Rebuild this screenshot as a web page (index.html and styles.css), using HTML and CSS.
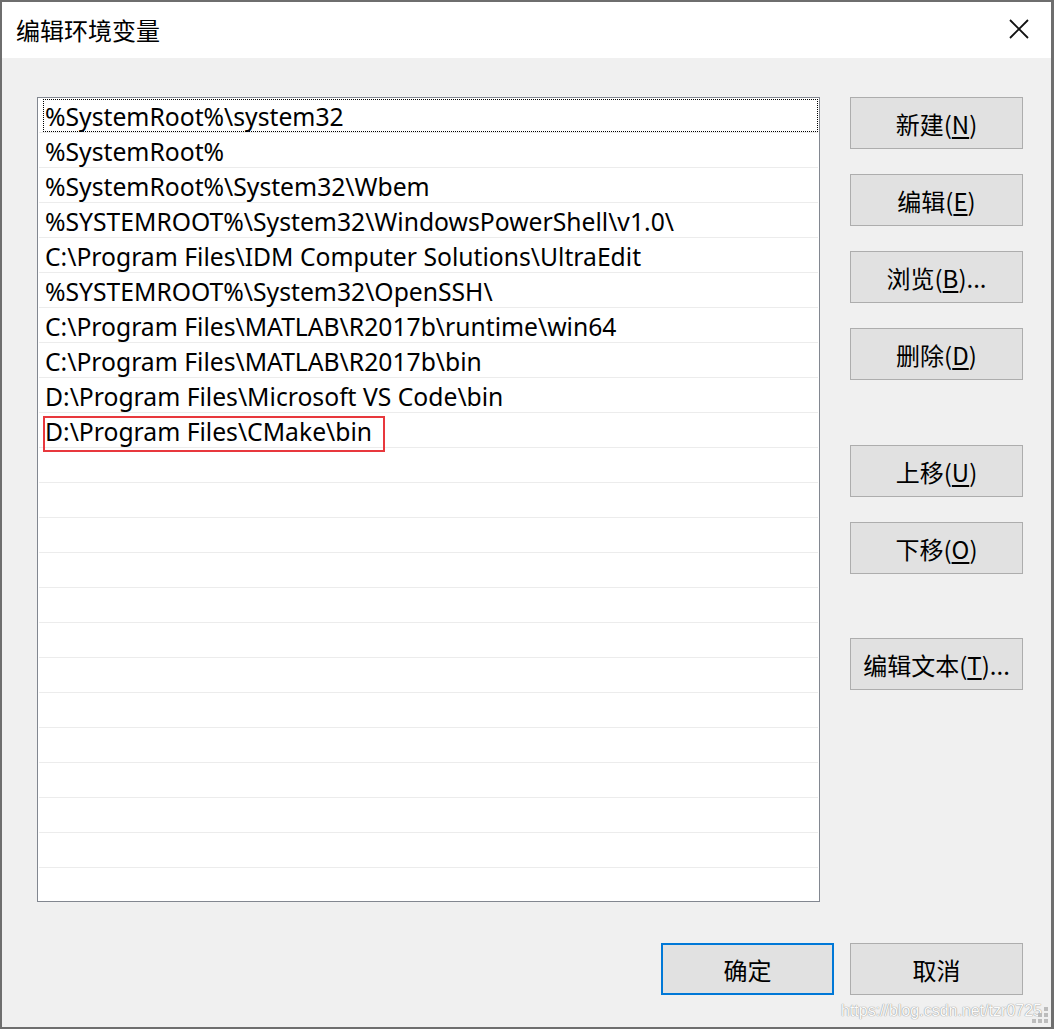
FILE: index.html
```html
<!DOCTYPE html>
<html lang="zh-CN">
<head>
<meta charset="utf-8">
<title>编辑环境变量</title>
<link rel="stylesheet" href="styles.css">
</head>
<body>
<div class="window">
  <div class="titlebar">
    <span class="title">编辑环境变量</span>
    <span class="close">
      <svg width="20" height="20" viewBox="0 0 20 20"><path d="M1 1 L19 19 M19 1 L1 19" stroke="#111" stroke-width="1.8" fill="none"/></svg>
    </span>
  </div>
  <div class="main">
    <div class="list">
      <div class="row focused">%SystemRoot%\system32</div>
      <div class="row">%SystemRoot%</div>
      <div class="row">%SystemRoot%\System32\Wbem</div>
      <div class="row">%SYSTEMROOT%\System32\WindowsPowerShell\v1.0\</div>
      <div class="row">C:\Program Files\IDM Computer Solutions\UltraEdit</div>
      <div class="row">%SYSTEMROOT%\System32\OpenSSH\</div>
      <div class="row">C:\Program Files\MATLAB\R2017b\runtime\win64</div>
      <div class="row">C:\Program Files\MATLAB\R2017b\bin</div>
      <div class="row">D:\Program Files\Microsoft VS Code\bin</div>
      <div class="row"><span class="marked">D:\Program Files\CMake\bin</span></div>
      <div class="row"></div>
      <div class="row"></div>
      <div class="row"></div>
      <div class="row"></div>
      <div class="row"></div>
      <div class="row"></div>
      <div class="row"></div>
      <div class="row"></div>
      <div class="row"></div>
      <div class="row"></div>
      <div class="row"></div>
      <div class="row"></div>
      <div class="row last"></div>
    </div>
    <div class="side">
      <div class="group">
        <button class="btn">新建(<u>N</u>)</button>
        <button class="btn">编辑(<u>E</u>)</button>
        <button class="btn">浏览(<u>B</u>)...</button>
        <button class="btn">删除(<u>D</u>)</button>
      </div>
      <div class="group g2">
        <button class="btn">上移(<u>U</u>)</button>
        <button class="btn">下移(<u>O</u>)</button>
      </div>
      <div class="group g3">
        <button class="btn">编辑文本(<u>T</u>)...</button>
      </div>
    </div>
  </div>
  <div class="footer">
    <button class="btn default">确定</button>
    <button class="btn">取消</button>
  </div>
  <div class="watermark">https://blog.csdn.net/tzr0725</div>
  <div class="grip">
    <i></i><i></i><i></i><i></i><i></i><i></i>
  </div>
</div>
</body>
</html>
```
FILE: styles.css
```css
html, body {
  margin: 0;
  padding: 0;
  background: #6e6e6e;
}
.window {
  position: relative;
  width: 1054px;
  height: 1029px;
  box-sizing: border-box;
  border-style: solid;
  border-color: #6e6e6e;
  border-width: 2px 3px 2px 2px;
  background: #f0f0f0;
  font-family: "Segoe UI", "Noto Sans", "Noto Sans CJK SC", sans-serif;
  color: #000;
  display: flex;
  flex-direction: column;
}
.titlebar {
  height: 56px;
  background: #fff;
  display: flex;
  align-items: center;
  justify-content: space-between;
  padding-left: 14px;
  padding-right: 22px;
}
.title {
  font-family: "Noto Sans CJK SC", sans-serif;
  font-size: 24px;
  margin-top: -2px;
}
.close {
  display: flex;
  margin-top: -3px;
}
.main {
  display: flex;
  padding: 39px 0 0 35px;
}
.list {
  width: 783px;
  height: 805px;
  box-sizing: border-box;
  border: 1px solid #828790;
  background: #fff;
  padding: 0 1px;
  overflow: hidden;
}
.row {
  position: relative;
  height: 35px;
  box-sizing: border-box;
  border-bottom: 1px solid #ececec;
  padding-left: 6px;
  font-size: 24.7px;
  line-height: 37px;
  white-space: nowrap;
}
.row.last { border-bottom: none; }
.row.focused::after {
  content: "";
  position: absolute;
  left: 4px;
  right: 0;
  top: 1px;
  bottom: 0;
  border: 1px dotted #000;
}
.marked {
  position: relative;
}
.marked::after {
  content: "";
  position: absolute;
  left: -2px;
  right: -13px;
  top: 1px;
  bottom: -4px;
  border: 2px solid #e8383d;
}
.side {
  margin-left: 30px;
  display: flex;
  flex-direction: column;
}
.group {
  display: flex;
  flex-direction: column;
  gap: 25px;
}
.g2 { margin-top: 65px; }
.g3 { margin-top: 64px; }
.btn {
  width: 173px;
  height: 52px;
  box-sizing: border-box;
  border: 1px solid #adadad;
  background: #e1e1e1;
  font-family: "Noto Sans CJK SC", sans-serif;
  font-size: 24px;
  color: #000;
  padding: 0;
  margin: 0;
  display: flex;
  align-items: center;
  justify-content: center;
}
.btn u {
  text-underline-offset: 3px;
}
.btn.default {
  border: 2px solid #0078d7;
}
.footer {
  display: flex;
  justify-content: flex-end;
  gap: 16px;
  padding-right: 28px;
  margin-top: 41px;
}
.watermark {
  position: absolute;
  right: 9px;
  bottom: 7px;
  font-family: "Liberation Sans", Arial, sans-serif;
  font-size: 16px;
  color: #fbfbfb;
  text-shadow: 0 0 1px #8a8a8a, 0 0 1px #a0a0a0;
}
.grip {
  position: absolute;
  right: 3px;
  bottom: 4px;
  width: 16px;
  height: 16px;
}
.grip i {
  position: absolute;
  width: 4px;
  height: 4px;
  background: #bcbcbc;
}
.grip i:nth-child(1) { right: 0; top: 0; }
.grip i:nth-child(2) { right: 0; top: 6px; }
.grip i:nth-child(3) { right: 6px; top: 6px; }
.grip i:nth-child(4) { right: 0; top: 12px; }
.grip i:nth-child(5) { right: 6px; top: 12px; }
.grip i:nth-child(6) { right: 12px; top: 12px; }
```
